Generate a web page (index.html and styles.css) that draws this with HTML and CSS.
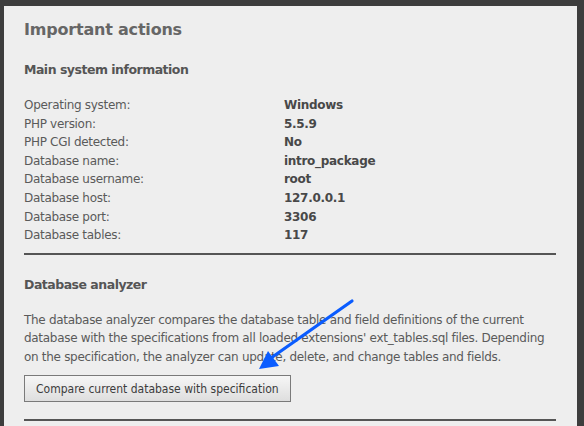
FILE: index.html
```html
<!DOCTYPE html>
<html>
<head>
<meta charset="utf-8">
<link rel="stylesheet" href="styles.css">
</head>
<body>
<div class="panel">
  <h1 class="title">Important actions</h1>
  <section class="section">
    <h2 class="heading">Main system information</h2>
    <div class="info">
      <div class="label">Operating system:</div><div class="value">Windows</div>
      <div class="label">PHP version:</div><div class="value">5.5.9</div>
      <div class="label">PHP CGI detected:</div><div class="value">No</div>
      <div class="label">Database name:</div><div class="value">intro_package</div>
      <div class="label">Database username:</div><div class="value">root</div>
      <div class="label">Database host:</div><div class="value">127.0.0.1</div>
      <div class="label">Database port:</div><div class="value">3306</div>
      <div class="label">Database tables:</div><div class="value">117</div>
    </div>
  </section>
  <hr class="divider">
  <section class="section">
    <h2 class="heading">Database analyzer</h2>
    <p class="text">The database analyzer compares the database table and field definitions of the current database with the specifications from all loaded extensions' ext_tables.sql files. Depending on the specification, the analyzer can update, delete, and change tables and fields.</p>
    <button class="button">Compare current database with specification</button>
  </section>
  <hr class="divider divider-end">
</div>
<svg class="arrow" width="584" height="426" viewBox="0 0 584 426">
  <line x1="352" y1="301" x2="271" y2="358" stroke="#0a5cff" stroke-width="3.2" stroke-linecap="round"/>
  <polygon points="259,369 268,351 279,366" fill="#0a5cff"/>
</svg>
</body>
</html>
```
FILE: styles.css
```css
html, body {
  margin: 0;
  padding: 0;
}
body {
  background: #3d3d3d;
  width: 584px;
  height: 426px;
  overflow: hidden;
  position: relative;
  font-family: "DejaVu Sans", Verdana, sans-serif;
  font-size: 12px;
  letter-spacing: -0.3px;
  color: #555;
}
.panel {
  margin: 6px 7px 0 4px;
  background: #eeeeee;
  padding: 14px 21px 0 20px;
  height: 420px;
  box-sizing: border-box;
}
.title {
  margin: 0;
  font-size: 16px;
  line-height: 20px;
  letter-spacing: -0.2px;
  font-weight: bold;
  color: #666;
}
.heading {
  margin: 0;
  font-size: 12.5px;
  line-height: 16px;
  letter-spacing: -0.5px;
  font-weight: bold;
  color: #555;
}
.section {
  padding-top: 22px;
}
.info {
  display: grid;
  grid-template-columns: 260px 1fr;
  margin-top: 18px;
  line-height: 18.6px;
}
.label {
  color: #5a5a5a;
}
.value {
  font-weight: bold;
  color: #484848;
}
.divider {
  border: 0;
  border-top: 2px solid #555;
  margin: 8px 0 0 0;
}
.divider-end {
  margin-top: 17px;
}
.text {
  margin: 18px 0 0 0;
  line-height: 18.5px;
  color: #5a5a5a;
}
.button {
  display: block;
  margin-top: 9px;
  font-family: "DejaVu Sans Condensed", "DejaVu Sans", sans-serif;
  font-size: 12px;
  letter-spacing: 0;
  color: #3c3c3c;
  background: linear-gradient(#f6f6f6, #dedede);
  border: 1px solid #7a7a7a;
  padding: 5px 11px;
  height: 27px;
}
.arrow {
  position: absolute;
  left: 0;
  top: 0;
  pointer-events: none;
}
```
